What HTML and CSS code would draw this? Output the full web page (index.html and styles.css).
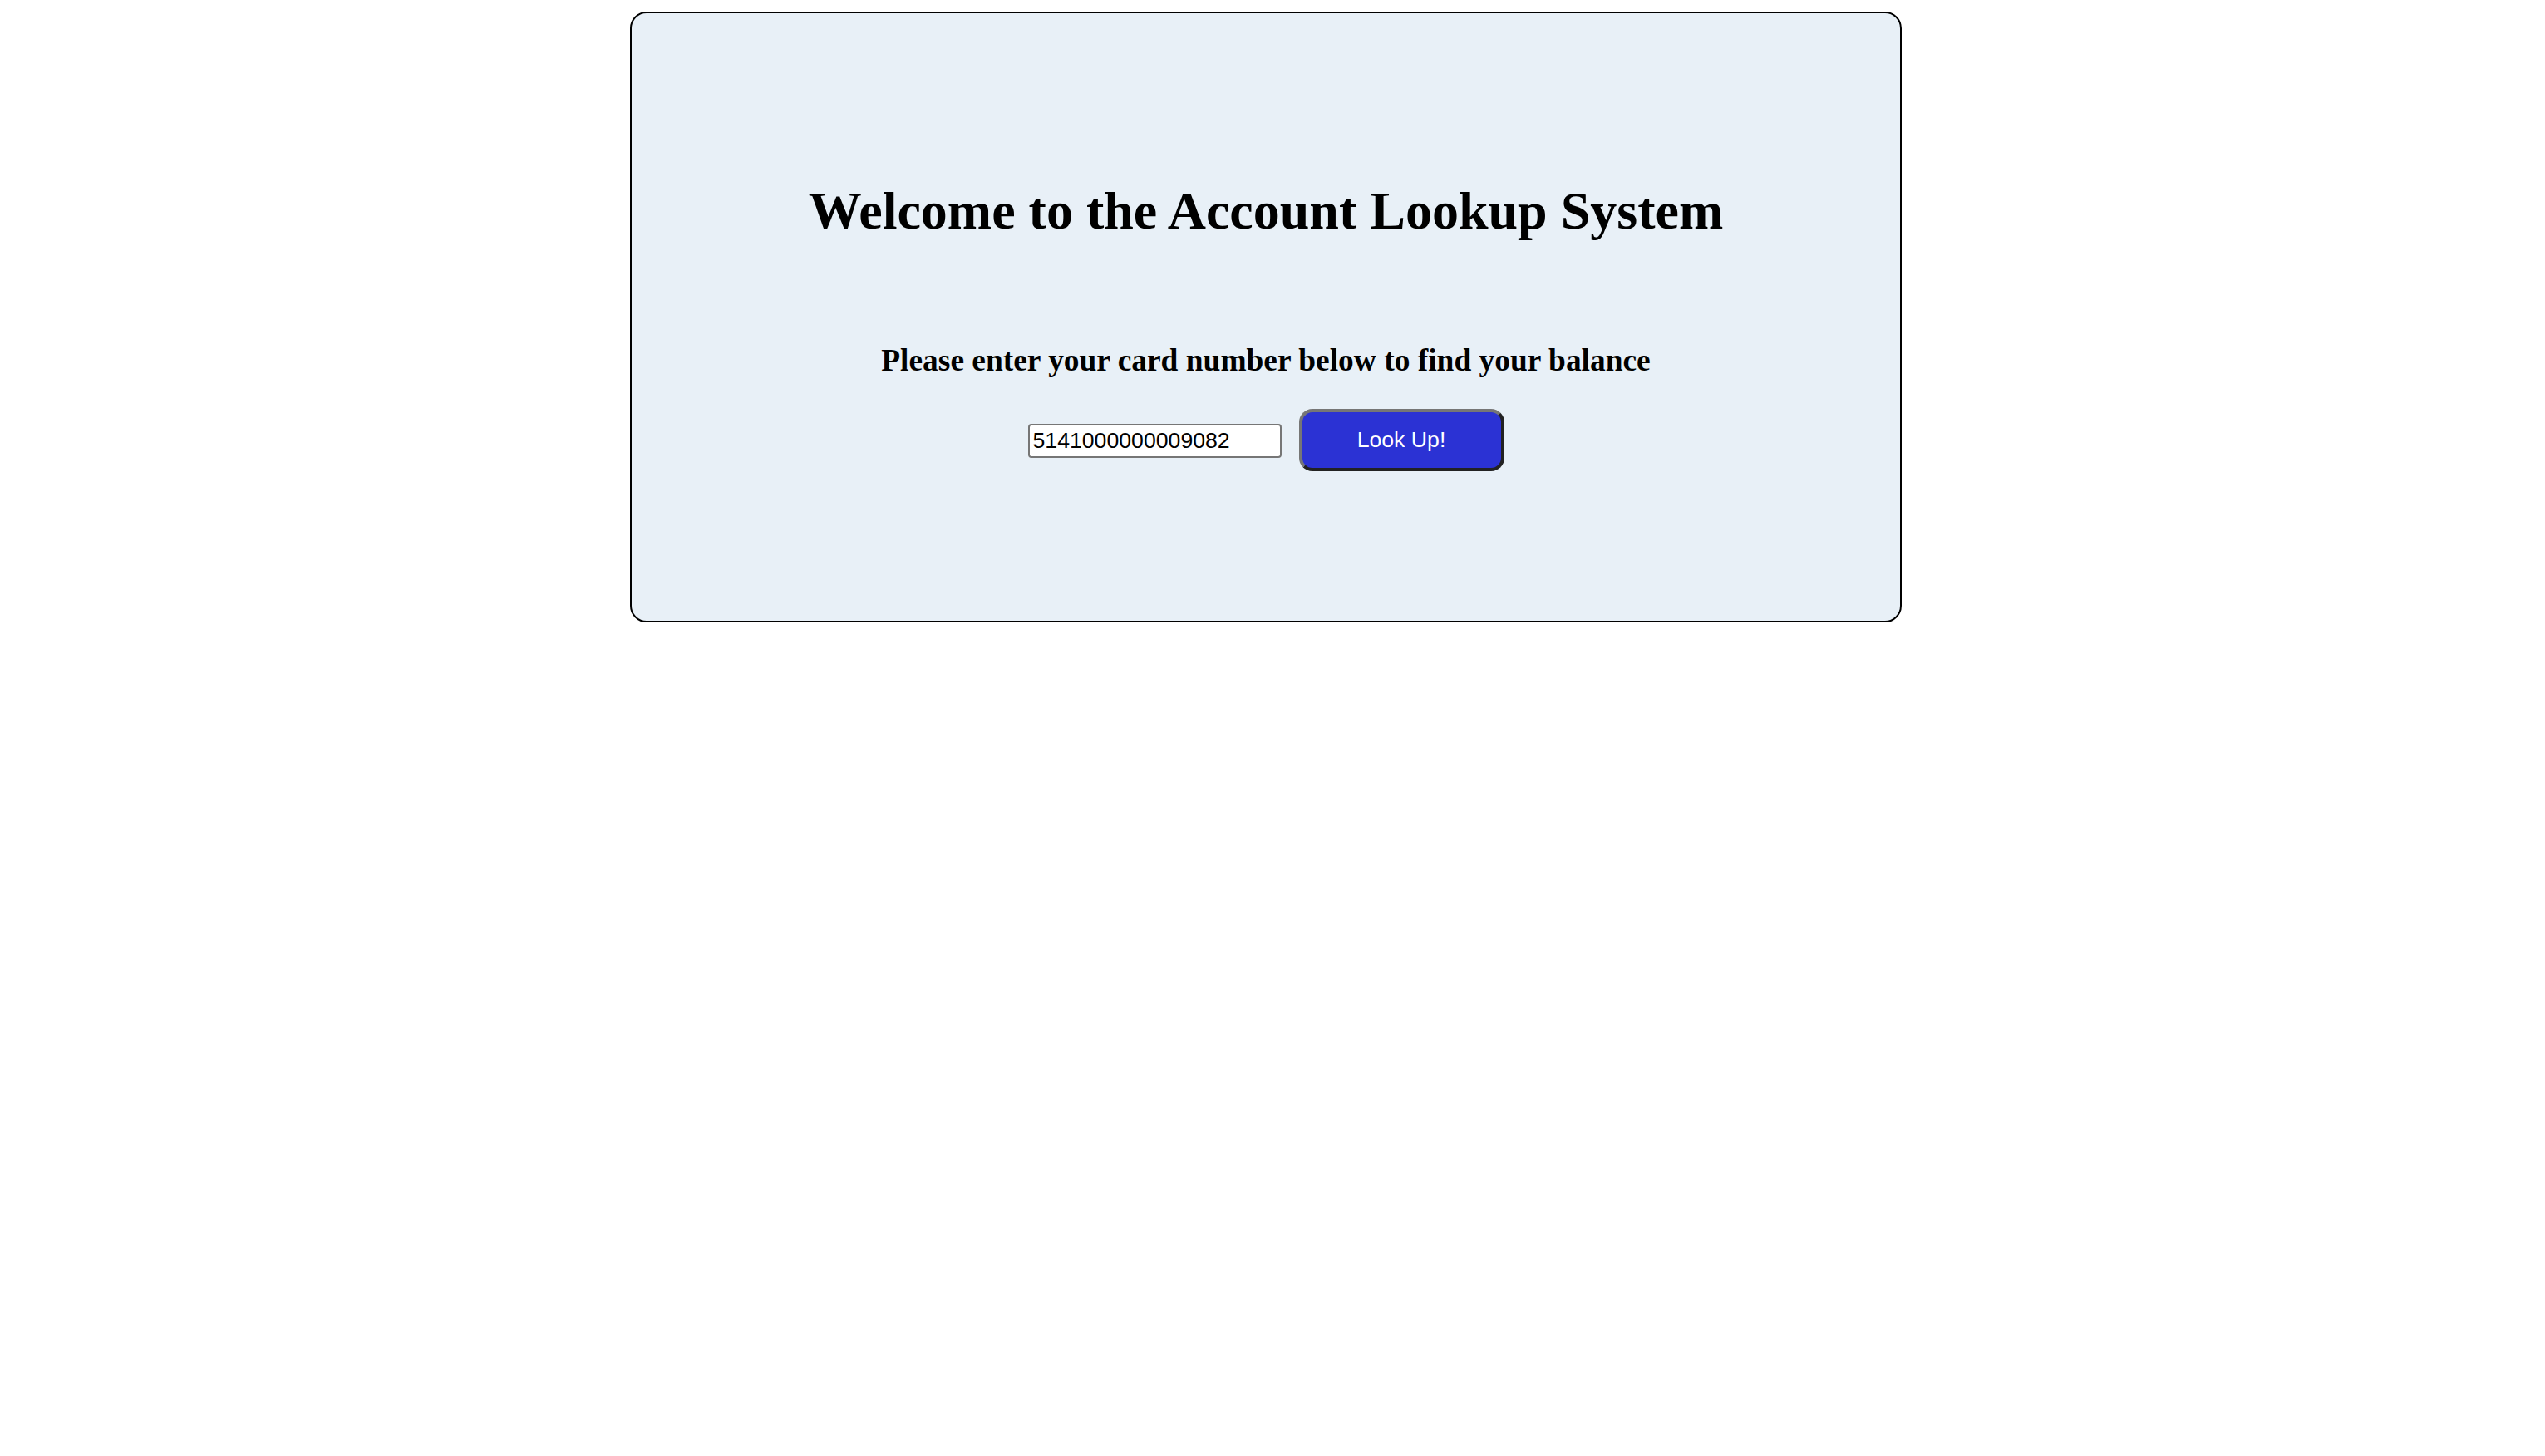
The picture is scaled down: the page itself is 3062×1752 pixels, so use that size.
FILE: index.html
```html
<!DOCTYPE html>
<html lang="en">
<head>
<meta charset="utf-8">
<title>Account Lookup</title>
<link rel="stylesheet" href="styles.css">
</head>
<body>
<div class="card">
  <h1 class="title">Welcome to the Account Lookup System</h1>
  <h3 class="subtitle">Please enter your card number below to find your balance</h3>
  <form class="lookup" onsubmit="return false;">
    <input class="card-input" type="text" value="5141000000009082">
    <button class="lookup-btn" type="submit">Look Up!</button>
  </form>
</div>
</body>
</html>
```

FILE: styles.css
```css
html, body {
  background: #ffffff;
}
body {
  margin: 14px 0 0 0;
  font-family: "Liberation Serif", "Times New Roman", serif;
  color: #000;
}
.card {
  box-sizing: border-box;
  width: 1530px;
  margin-left: 758px;
  border: 2px solid #000;
  border-radius: 20px;
  background: #e8f0f7;
  text-align: center;
  padding: 201px 0 180px 0;
}
.title {
  margin: 0;
  font-size: 64px;
  line-height: 74px;
  font-weight: 700;
}
.subtitle {
  margin: 121px 0 0 0;
  font-size: 37.44px;
  line-height: 44px;
  font-weight: 700;
}
.lookup {
  margin: 36px 0 0 0;
  display: flex;
  justify-content: center;
  align-items: center;
  gap: 21px;
}
.card-input {
  box-sizing: border-box;
  width: 305px;
  height: 41px;
  margin: 2px 0 0 0;
  padding: 2px 4px;
  border: 2px solid #767676;
  border-radius: 4px;
  background: #fff;
  font-family: "Liberation Sans", Arial, sans-serif;
  font-size: 26.67px;
  color: #000;
  outline: none;
}
.lookup-btn {
  box-sizing: border-box;
  width: 247px;
  height: 75px;
  padding: 0;
  border-width: 4px;
  border-style: solid;
  border-color: #767676 #222222 #222222 #767676;
  border-radius: 16px;
  background: #2b32d4;
  color: #fff;
  font-family: "Liberation Sans", Arial, sans-serif;
  font-size: 26.67px;
  cursor: pointer;
}
```
